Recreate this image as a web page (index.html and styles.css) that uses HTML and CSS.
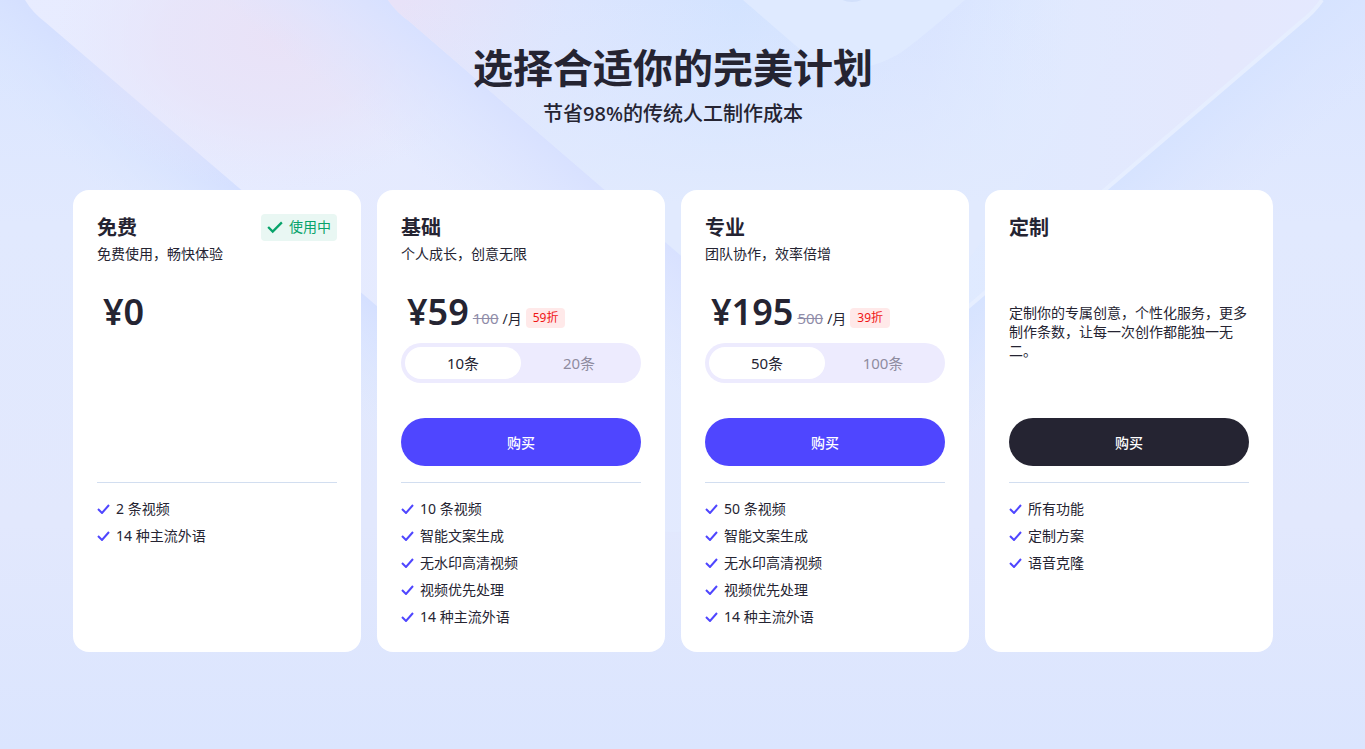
FILE: index.html
```html
<!DOCTYPE html>
<html lang="zh-CN">
<head>
<meta charset="utf-8">
<meta name="viewport" content="width=device-width, initial-scale=1">
<title>选择合适你的完美计划</title>
<link rel="stylesheet" href="styles.css">
</head>
<body>
<svg class="backdrop" viewBox="0 0 1365 749" preserveAspectRatio="xMidYMin slice" aria-hidden="true">
  <defs>
    <linearGradient id="base" x1="0" y1="0" x2="0" y2="1">
      <stop offset="0" stop-color="#dae5ff"/>
      <stop offset=".3" stop-color="#e1e9fe"/>
      <stop offset=".7" stop-color="#e2e8fd"/>
      <stop offset="1" stop-color="#dbe5fe"/>
    </linearGradient>
    <linearGradient id="shadeL" gradientUnits="userSpaceOnUse" x1="142" y1="106" x2="82" y2="176">
      <stop offset="0" stop-color="#d5e0ff"/>
      <stop offset="1" stop-color="#dbe7ff" stop-opacity="0"/>
    </linearGradient>
    <linearGradient id="shadeR" gradientUnits="userSpaceOnUse" x1="1201" y1="106" x2="1265" y2="180">
      <stop offset="0" stop-color="#d6e3ff"/>
      <stop offset="1" stop-color="#dbe5ff" stop-opacity="0"/>
    </linearGradient>
    <linearGradient id="outer" gradientUnits="userSpaceOnUse" x1="0" y1="0" x2="1365" y2="0">
      <stop offset="0" stop-color="#e8ecff"/>
      <stop offset=".4" stop-color="#e4eafe"/>
      <stop offset=".7" stop-color="#dfeaff"/>
      <stop offset=".9" stop-color="#e4e8fd"/>
      <stop offset="1" stop-color="#e4e9ff"/>
    </linearGradient>
    <linearGradient id="shadeM" gradientUnits="userSpaceOnUse" x1="508" y1="106" x2="438" y2="188">
      <stop offset="0" stop-color="#d8e1ff"/>
      <stop offset="1" stop-color="#dde5ff" stop-opacity="0"/>
    </linearGradient>
    <linearGradient id="inner" gradientUnits="userSpaceOnUse" x1="400" y1="0" x2="1060" y2="110">
      <stop offset="0" stop-color="#e8e2f8"/>
      <stop offset=".25" stop-color="#dce5fe"/>
      <stop offset=".5" stop-color="#d3e3ff"/>
      <stop offset=".8" stop-color="#d9e4ff"/>
      <stop offset="1" stop-color="#dce8ff" stop-opacity="0"/>
    </linearGradient>
    <linearGradient id="fade" x1="0" y1="0" x2="0" y2="1">
      <stop offset="0" stop-color="#e1eafe" stop-opacity="0"/>
      <stop offset=".75" stop-color="#e1eafe"/>
      <stop offset="1" stop-color="#e1eafe"/>
    </linearGradient>
    <radialGradient id="pink">
      <stop offset="0" stop-color="#e9e2f7"/>
      <stop offset=".5" stop-color="#e8e3f8" stop-opacity=".75"/>
      <stop offset="1" stop-color="#e7e6fb" stop-opacity="0"/>
    </radialGradient>
  </defs>
  <rect width="1365" height="749" fill="url(#base)"/>
  <path d="M0 0H400V749H0Z" fill="url(#shadeL)"/>
  <path d="M1365 0H940V749H1365Z" fill="url(#shadeR)"/>
  <path d="M25 0Q32 12 45 22L620 514Q673 550 725 514L1300 22Q1314 12 1321 0Z" fill="url(#outer)"/>
  <ellipse cx="275" cy="40" rx="220" ry="150" fill="url(#pink)"/>
  <path d="M1322 0Q1314 12 1301 22L960 314" fill="none" stroke="#e6eeff" stroke-width="4"/>
  <path d="M388 0Q396 12 410 22L700 272V420L200 220L100 0Z" fill="url(#shadeM)"/>
  <path d="M388 0Q396 12 410 22L700 272H960L1150 0Z" fill="url(#inner)"/>
  <path d="M388 0Q396 12 410 22L700 272H960L1150 0Z" fill="url(#fade)"/>
  <path d="M743 0L810 58Q852 80 895 56Q905 52 965 0Z" fill="#dfeaff"/>
  <ellipse cx="852" cy="-8" rx="16" ry="10" fill="#d2e0fb"/>
</svg>
<main class="page">
  <header class="intro">
    <h1 class="intro-title">选择合适你的完美计划</h1>
    <p class="intro-text">节省98%的传统人工制作成本</p>
  </header>
  <div class="plans">
    <section class="card">
      <div class="card-head">
        <h2 class="name">免费</h2>
        <span class="status"><svg class="status-icon" viewBox="0 0 14 12" aria-hidden="true"><path d="M1 6L5 10L13 2"/></svg>使用中</span>
      </div>
      <p class="tagline">免费使用，畅快体验</p>
      <div class="offer">
        <p class="price-row"><span class="price">¥0</span></p>
      </div>
      <div class="action"></div>
      <ul class="features">
        <li class="feature"><svg class="tick" viewBox="0 0 13 10" aria-hidden="true"><path d="M1 5L5 9L12 1"/></svg>2 条视频</li>
        <li class="feature"><svg class="tick" viewBox="0 0 13 10" aria-hidden="true"><path d="M1 5L5 9L12 1"/></svg>14 种主流外语</li>
      </ul>
    </section>
    <section class="card">
      <div class="card-head"><h2 class="name">基础</h2></div>
      <p class="tagline">个人成长，创意无限</p>
      <div class="offer">
        <p class="price-row"><span class="price">¥59</span><del class="old">100</del><span class="unit">/月</span><span class="discount">59折</span></p>
        <div class="switch">
          <button class="option option-on" type="button" aria-pressed="true">10条</button>
          <button class="option" type="button" aria-pressed="false">20条</button>
        </div>
      </div>
      <div class="action"><button class="buy" type="button">购买</button></div>
      <ul class="features">
        <li class="feature"><svg class="tick" viewBox="0 0 13 10" aria-hidden="true"><path d="M1 5L5 9L12 1"/></svg>10 条视频</li>
        <li class="feature"><svg class="tick" viewBox="0 0 13 10" aria-hidden="true"><path d="M1 5L5 9L12 1"/></svg>智能文案生成</li>
        <li class="feature"><svg class="tick" viewBox="0 0 13 10" aria-hidden="true"><path d="M1 5L5 9L12 1"/></svg>无水印高清视频</li>
        <li class="feature"><svg class="tick" viewBox="0 0 13 10" aria-hidden="true"><path d="M1 5L5 9L12 1"/></svg>视频优先处理</li>
        <li class="feature"><svg class="tick" viewBox="0 0 13 10" aria-hidden="true"><path d="M1 5L5 9L12 1"/></svg>14 种主流外语</li>
      </ul>
    </section>
    <section class="card">
      <div class="card-head"><h2 class="name">专业</h2></div>
      <p class="tagline">团队协作，效率倍增</p>
      <div class="offer">
        <p class="price-row"><span class="price">¥195</span><del class="old">500</del><span class="unit">/月</span><span class="discount">39折</span></p>
        <div class="switch">
          <button class="option option-on" type="button" aria-pressed="true">50条</button>
          <button class="option" type="button" aria-pressed="false">100条</button>
        </div>
      </div>
      <div class="action"><button class="buy" type="button">购买</button></div>
      <ul class="features">
        <li class="feature"><svg class="tick" viewBox="0 0 13 10" aria-hidden="true"><path d="M1 5L5 9L12 1"/></svg>50 条视频</li>
        <li class="feature"><svg class="tick" viewBox="0 0 13 10" aria-hidden="true"><path d="M1 5L5 9L12 1"/></svg>智能文案生成</li>
        <li class="feature"><svg class="tick" viewBox="0 0 13 10" aria-hidden="true"><path d="M1 5L5 9L12 1"/></svg>无水印高清视频</li>
        <li class="feature"><svg class="tick" viewBox="0 0 13 10" aria-hidden="true"><path d="M1 5L5 9L12 1"/></svg>视频优先处理</li>
        <li class="feature"><svg class="tick" viewBox="0 0 13 10" aria-hidden="true"><path d="M1 5L5 9L12 1"/></svg>14 种主流外语</li>
      </ul>
    </section>
    <section class="card">
      <div class="card-head"><h2 class="name">定制</h2></div>
      <p class="tagline"></p>
      <div class="offer">
        <p class="note">定制你的专属创意，个性化服务，更多制作条数，让每一次创作都能独一无二。</p>
      </div>
      <div class="action"><button class="buy buy-dark" type="button">购买</button></div>
      <ul class="features">
        <li class="feature"><svg class="tick" viewBox="0 0 13 10" aria-hidden="true"><path d="M1 5L5 9L12 1"/></svg>所有功能</li>
        <li class="feature"><svg class="tick" viewBox="0 0 13 10" aria-hidden="true"><path d="M1 5L5 9L12 1"/></svg>定制方案</li>
        <li class="feature"><svg class="tick" viewBox="0 0 13 10" aria-hidden="true"><path d="M1 5L5 9L12 1"/></svg>语音克隆</li>
      </ul>
    </section>
  </div>
</main>
</body>
</html>
```
FILE: styles.css
```css
* {
  box-sizing: border-box;
}

body {
  margin: 0;
  min-height: 100vh;
  background: #dbe5fe;
  color: #252432;
  font-family: "Noto Sans", "Noto Sans CJK SC", sans-serif;
  font-size: 14px;
  line-height: 19px;
}

h1,
h2,
p,
ul {
  margin: 0;
  padding: 0;
}

button {
  border: 0;
  padding: 0;
  font: inherit;
  cursor: pointer;
}

.backdrop {
  position: absolute;
  inset: 0;
  z-index: -1;
  width: 100%;
  height: 100%;
}

.page {
  padding: 44px 19px 96px 0;
}

.intro {
  text-align: center;
}

.intro-title {
  font-size: 40px;
  line-height: 48px;
  font-weight: 700;
}

.intro-text {
  margin-top: 8px;
  font-size: 20px;
  line-height: 28px;
  font-weight: 500;
}

.plans {
  display: grid;
  grid-template-columns: repeat(4, 1fr);
  gap: 16px;
  max-width: 1200px;
  margin: 62px auto 0;
}

.card {
  padding: 24px 24px 25px;
  border-radius: 16px;
  background: #fff;
}

.card-head {
  display: flex;
  align-items: flex-start;
  justify-content: space-between;
  height: 30px;
}

.name {
  font-size: 20px;
  line-height: 27px;
  font-weight: 700;
}

.status {
  display: flex;
  align-items: center;
  gap: 6px;
  height: 27px;
  padding: 0 6px 2px;
  border-radius: 4px;
  background: #e9f7f3;
  color: #07a36a;
}

.status-icon {
  width: 16px;
  height: 14px;
  fill: none;
  stroke: currentColor;
  stroke-width: 2;
}

.tagline {
  height: 19px;
}

.offer {
  height: 139px;
  padding-top: 26px;
}

.price-row {
  display: flex;
  align-items: flex-end;
  height: 39px;
  margin-bottom: 15px;
  padding: 0 6px;
}

.price {
  margin-right: 4px;
  font-size: 36px;
  line-height: 32px;
  font-weight: 600;
}

.old {
  margin-right: 4px;
  color: #8f8ca8;
  font-size: 15px;
}

.discount {
  margin-left: 4px;
  padding: 0 7px;
  border-radius: 4px;
  background: #ffe9e9;
  color: #f01414;
  font-size: 12px;
  line-height: 20px;
}

.switch {
  display: flex;
  height: 40px;
  padding: 4px;
  border-radius: 20px;
  background: #edebfe;
}

.option {
  flex: 1;
  border-radius: 16px;
  background: none;
  color: #8f8ca0;
  font-size: 15px;
}

.option-on {
  background: #fff;
  color: #252432;
}

.note {
  padding-top: 14px;
}

.action {
  height: 81px;
  padding: 16px 0;
  border-bottom: 1px solid #d2def0;
}

.buy {
  width: 100%;
  height: 48px;
  border-radius: 24px;
  background: #4f46ff;
  color: #fff;
  font-weight: 500;
}

.buy-dark {
  background: #252432;
}

.features {
  display: grid;
  gap: 8px;
  min-height: 144px;
  padding-top: 16px;
  align-content: start;
  list-style: none;
}

.feature {
  display: flex;
  align-items: center;
  gap: 6px;
}

.tick {
  width: 13px;
  height: 10px;
  fill: none;
  stroke: #4f46ff;
  stroke-width: 2;
}
```
